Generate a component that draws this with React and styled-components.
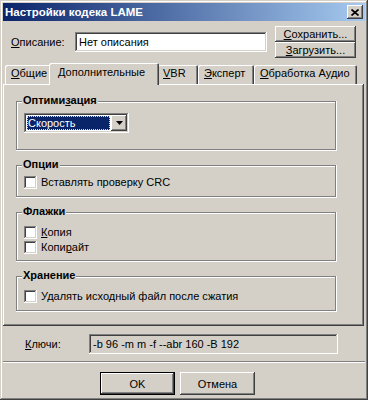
import styled, { createGlobalStyle } from "styled-components";

const FACE = "#D4D0C8";
const SHADOW = "#808080";
const DARK = "#404040";
const FONT = `"Liberation Sans", Arial, sans-serif`;

const raised = `box-shadow: inset -1px -1px ${DARK}, inset 1px 1px #fff, inset -2px -2px ${SHADOW}, inset 2px 2px ${FACE};`;
const sunken = `box-shadow: inset -1px -1px #fff, inset 1px 1px ${SHADOW}, inset -2px -2px ${FACE}, inset 2px 2px ${DARK};`;
const etched = `box-shadow: inset -1px -1px #fff, inset 1px 1px ${SHADOW}, inset -2px -2px ${SHADOW}, inset 2px 2px #fff;`;

const GlobalStyle = createGlobalStyle`
  body {
    margin: 0;
    background: ${FACE};
    font-family: ${FONT};
    font-size: 11px;
    color: #000;
  }
  * { box-sizing: border-box; }
  u { text-decoration-thickness: 1px; text-underline-offset: 1px; }
`;

const Window = styled.div`
  width: 368px;
  height: 400px;
  padding: 3px;
  background: ${FACE};
  display: flex;
  flex-direction: column;
  box-shadow: inset -1px -1px ${DARK}, inset 1px 1px ${FACE},
    inset -2px -2px ${SHADOW}, inset 2px 2px #fff;
`;

const TitleBar = styled.div`
  height: 18px;
  flex: 0 0 18px;
  display: flex;
  align-items: center;
  justify-content: space-between;
  padding: 0 2px 0 2px;
  background: linear-gradient(to right, #0a246a, #a6caf0);
  color: #fff;
  font-weight: bold;
  font-size: 11.5px;
`;

const CloseButton = styled.div`
  width: 16px;
  height: 14px;
  display: flex;
  align-items: center;
  justify-content: center;
  background: ${FACE};
  ${raised}
`;

const DescRow = styled.div`
  margin-top: 5px;
  height: 32px;
  display: flex;
  align-items: center;
  padding-left: 8px;
`;

const Label = styled.span`
  width: ${({ $w }) => $w}px;
  flex: 0 0 auto;
`;

const Field = styled.div`
  width: ${({ $w }) => $w}px;
  height: 20px;
  display: flex;
  align-items: center;
  padding: 0 4px;
  background: ${({ $readonly }) => ($readonly ? FACE : "#fff")};
  ${sunken}
`;

const SideButtons = styled.div`
  margin-left: 8px;
  display: flex;
  flex-direction: column;
`;

const SmallButton = styled.div`
  width: 81px;
  height: 16px;
  display: flex;
  align-items: center;
  justify-content: center;
  background: ${FACE};
  ${raised}
`;

const TabStrip = styled.div`
  margin-top: 5px;
  height: 21px;
  display: flex;
  align-items: flex-end;
  padding-left: 2px;
  position: relative;
  z-index: 1;
`;

const Tab = styled.div`
  width: ${({ $w, $active }) => ($active ? $w + 4 : $w)}px;
  height: ${({ $active }) => ($active ? 22 : 19)}px;
  margin: 0 ${({ $active }) => ($active ? -2 : 0)}px
    ${({ $active }) => ($active ? -1 : 0)}px;
  padding-left: ${({ $active }) => ($active ? 9 : 6)}px;
  padding-top: ${({ $active }) => ($active ? 3 : 2)}px;
  background: ${FACE};
  white-space: nowrap;
  border-radius: 2px 2px 0 0;
  position: relative;
  z-index: ${({ $active }) => ($active ? 2 : 0)};
  box-shadow: inset 1px 1px #fff, inset -1px 0 ${DARK}, inset -2px 0 ${SHADOW};
`;

const Panel = styled.div`
  flex: 0 0 240px;
  margin-right: 1px;
  padding: 17px 0 0 13px;
  background: ${FACE};
  box-shadow: inset -1px -1px ${DARK}, inset 1px 1px #fff,
    inset -2px -2px ${SHADOW};
`;

const Group = styled.div`
  width: 321px;
  height: ${({ $h }) => $h}px;
  margin-bottom: 14px;
  padding: 0 8px;
  display: flex;
  flex-direction: column;
  align-items: flex-start;
  ${etched}
`;

const Legend = styled.span`
  margin: -7px 0 ${({ $gap }) => $gap}px -2px;
  padding: 0 1px;
  line-height: 13px;
  font-weight: bold;
  background: ${FACE};
`;

const CheckRow = styled.label`
  display: flex;
  align-items: center;
  gap: 4px;
  height: 13px;
  margin-bottom: 2px;
  line-height: 13px;
`;

const Box = styled.span`
  width: 13px;
  height: 13px;
  background: #fff;
  ${sunken}
`;

const Combo = styled.div`
  width: 105px;
  height: 20px;
  padding: 2px;
  display: flex;
  background: #fff;
  ${sunken}
`;

const ComboValue = styled.div`
  flex: 1;
  margin: 1px;
  padding-left: 1px;
  display: flex;
  align-items: center;
  background: #0a246a;
  color: #fff;
  outline: 1px dotted #f5db95;
  outline-offset: -1px;
`;

const ComboButton = styled.div`
  width: 16px;
  display: flex;
  align-items: center;
  justify-content: center;
  background: ${FACE};
  ${raised}
`;

const KeysRow = styled.div`
  margin-top: 8px;
  height: 20px;
  display: flex;
  align-items: center;
  padding-left: 22px;
`;

const Separator = styled.div`
  margin-top: 7px;
  height: 2px;
  border-top: 1px solid ${SHADOW};
  border-bottom: 1px solid #fff;
`;

const ButtonRow = styled.div`
  margin-top: 9px;
  display: flex;
  gap: 5px;
  padding-left: 97px;
`;

const Button = styled.div`
  width: 75px;
  height: 23px;
  display: flex;
  align-items: center;
  justify-content: center;
  background: ${FACE};
  ${({ $default }) =>
    $default
      ? `box-shadow: inset 0 0 0 1px #000, inset -2px -2px ${DARK}, inset 2px 2px #fff, inset -3px -3px ${SHADOW}, inset 3px 3px ${FACE};`
      : raised}
`;

const tabs = [
  { w: 46, label: <><u>О</u>бщие</> },
  { w: 106, label: "Дополнительные", active: true },
  { w: 41, label: <><u>V</u>BR</> },
  { w: 56, label: <><u>Э</u>ксперт</> },
  { w: 103, label: <><u>О</u>бработка Аудио</> },
];

function Check({ children }) {
  return (
    <CheckRow>
      <Box />
      <span>{children}</span>
    </CheckRow>
  );
}

export default function App() {
  return (
    <>
      <GlobalStyle />
      <Window>
        <TitleBar>
          <span>Настройки кодека LAME</span>
          <CloseButton>
            <svg width="8" height="7" viewBox="0 0 8 7">
              <path d="M0.5 0.5 L7.5 6.5 M7.5 0.5 L0.5 6.5" stroke="#000" strokeWidth="1.7" />
            </svg>
          </CloseButton>
        </TitleBar>

        <DescRow>
          <Label $w={64}>
            <u>О</u>писание:
          </Label>
          <Field $w={192}>Нет описания</Field>
          <SideButtons>
            <SmallButton>
              <span><u>С</u>охранить...</span>
            </SmallButton>
            <SmallButton>
              <span><u>З</u>агрузить...</span>
            </SmallButton>
          </SideButtons>
        </DescRow>

        <TabStrip>
          {tabs.map((t, i) => (
            <Tab key={i} $w={t.w} $active={t.active}>
              {t.label}
            </Tab>
          ))}
        </TabStrip>

        <Panel>
          <Group $h={50}>
            <Legend $gap={6}>
              Оптими<u>з</u>ация
            </Legend>
            <Combo>
              <ComboValue>Скорость</ComboValue>
              <ComboButton>
                <svg width="7" height="4" viewBox="0 0 7 4">
                  <path d="M0 0 H7 L3.5 4 Z" fill="#000" />
                </svg>
              </ComboButton>
            </Combo>
          </Group>

          <Group $h={33}>
            <Legend $gap={5}>Опции</Legend>
            <Check>Вставлять проверку CRC</Check>
          </Group>

          <Group $h={50}>
            <Legend $gap={8}>Флажки</Legend>
            <Check>
              <u>К</u>опия
            </Check>
            <Check>
              Копи<u>р</u>айт
            </Check>
          </Group>

          <Group $h={36}>
            <Legend $gap={8}>Хранение</Legend>
            <Check>Удалять исходный файл после сжатия</Check>
          </Group>
        </Panel>

        <KeysRow>
          <Label $w={64}>
            <u>К</u>лючи:
          </Label>
          <Field $w={249} $readonly>
            -b 96 -m m -f --abr 160 -B 192
          </Field>
        </KeysRow>

        <Separator />

        <ButtonRow>
          <Button $default>OK</Button>
          <Button>Отмена</Button>
        </ButtonRow>
      </Window>
    </>
  );
}
